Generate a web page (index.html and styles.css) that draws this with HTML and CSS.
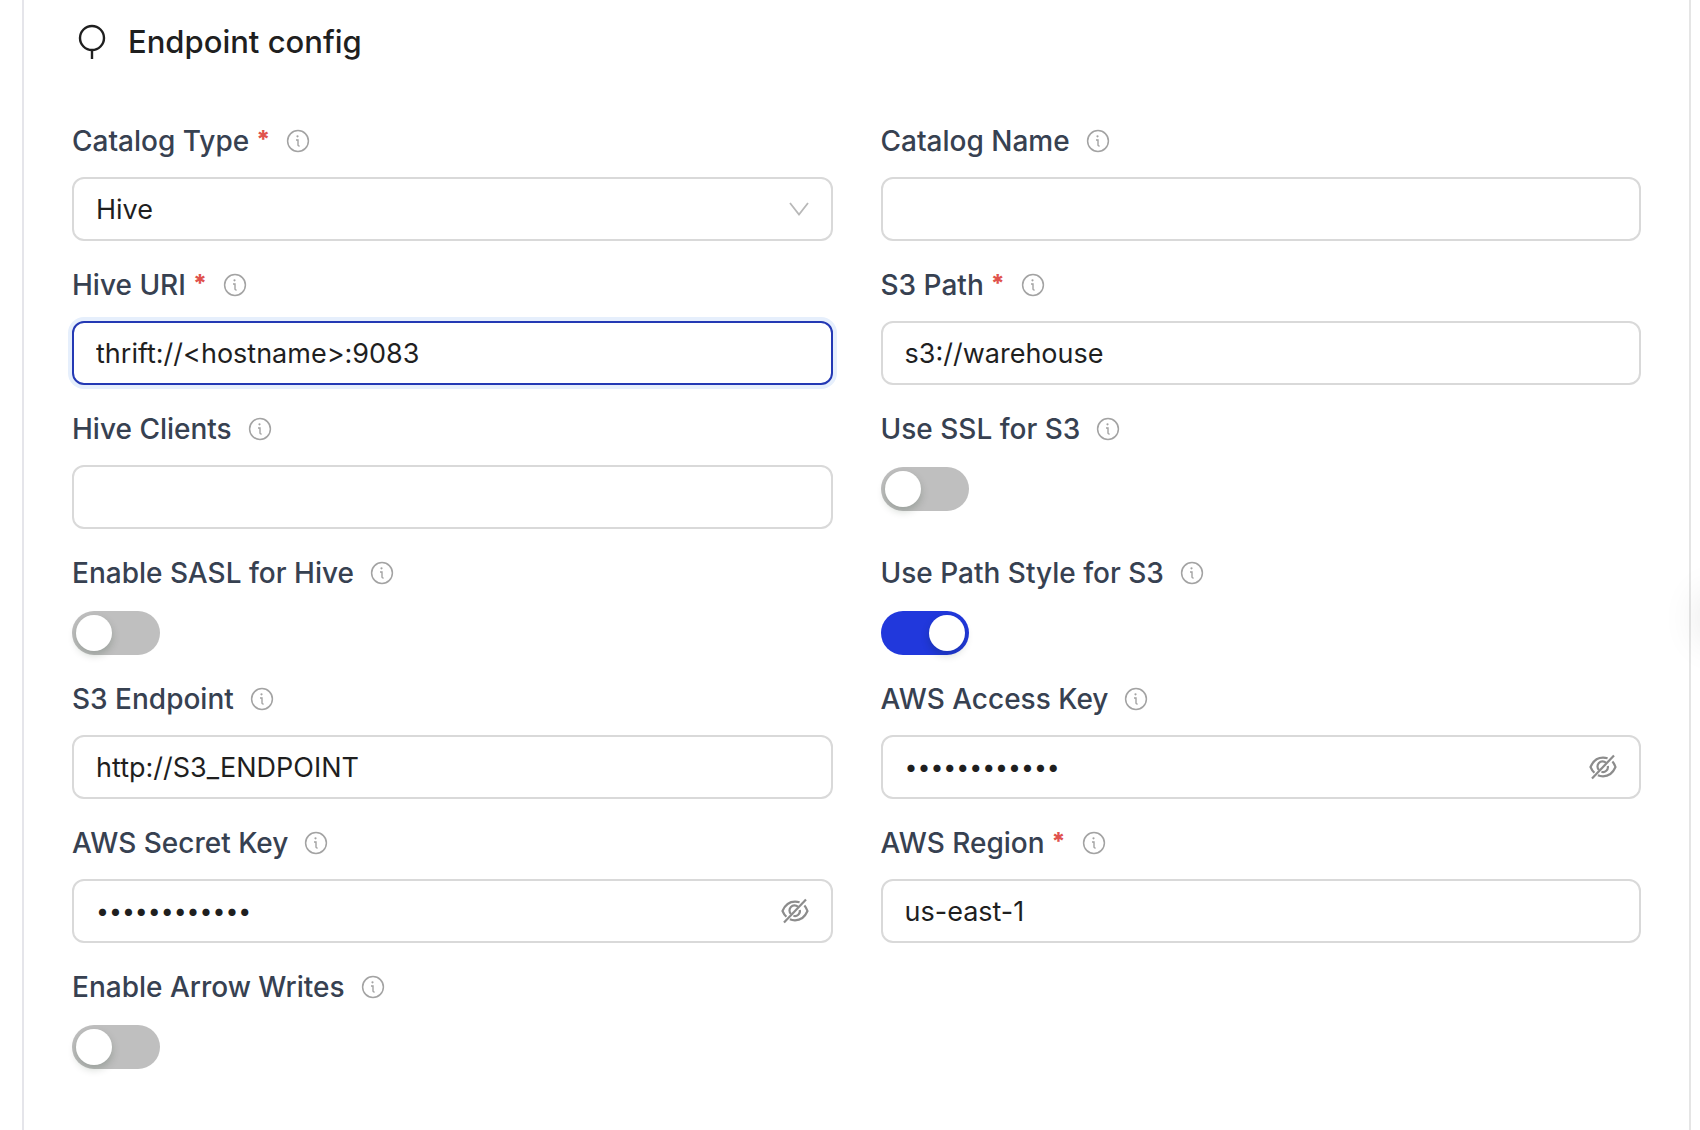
FILE: index.html
```html
<!DOCTYPE html>
<html lang="en">
<head>
  <meta charset="UTF-8">
  <meta name="viewport" content="width=device-width, initial-scale=1">
  <title>Endpoint config</title>
  <link rel="stylesheet" href="styles.css">
</head>
<body>

  <!-- Shared icons -->
  <svg class="icon-defs" aria-hidden="true">
    <symbol id="icon-info" viewBox="0 0 24 24">
      <circle cx="12" cy="12" r="10.4" fill="none" stroke="currentColor" stroke-width="1.5"/>
      <circle cx="11.5" cy="7.3" r="1.1" fill="currentColor"/>
      <path d="M10 11h2v4.8q0 1.4 1.6 1.2" fill="none" stroke="currentColor" stroke-width="1.4"/>
    </symbol>
    <symbol id="icon-eye-off" viewBox="0 0 28 28">
      <path d="M18.6 5.3A14 11 0 0 0 14 4.7C8 4.7 4 8.2 1.5 14c1 2.4 2.3 4.3 3.9 5.8M23.4 8.4c1.3 1.4 2.3 3.3 3.1 5.6C24 19.8 20 23.3 14 23.3c-1.9 0-3.6-.3-5.1-1" fill="none" stroke="currentColor" stroke-width="2.2"/>
      <path d="M17 9.8A5 5 0 0 0 10 17M18.8 13a5 5 0 0 1-6.4 5.8" fill="none" stroke="currentColor" stroke-width="2.2"/>
      <path d="M3 25.5 25 2.5" fill="none" stroke="currentColor" stroke-width="2.2"/>
    </symbol>
  </svg>

  <main class="card">
    <div class="card-header">
      <svg class="header-icon" viewBox="0 0 28 36" aria-hidden="true">
        <circle cx="14" cy="14" r="12" fill="none" stroke="currentColor" stroke-width="2.4"/>
        <path d="M14 26v9" stroke="currentColor" stroke-width="2.4"/>
      </svg>
      <h2>Endpoint config</h2>
    </div>

    <form class="config-form">
      <div class="form-item">
        <div class="form-label">
          <label for="catalog-type">Catalog Type</label>
          <span class="required">*</span>
          <svg class="info-icon"><use href="#icon-info"/></svg>
        </div>
        <div class="control">
          <select id="catalog-type" class="field">
            <option selected>Hive</option>
          </select>
          <svg class="arrow-icon" viewBox="0 0 20 14" aria-hidden="true">
            <path d="M1 1l9 11.5L19 1" fill="none" stroke="currentColor" stroke-width="1.8"/>
          </svg>
        </div>
      </div>

      <div class="form-item">
        <div class="form-label">
          <label for="catalog-name">Catalog Name</label>
          <svg class="info-icon"><use href="#icon-info"/></svg>
        </div>
        <input type="text" id="catalog-name" class="field">
      </div>

      <div class="form-item">
        <div class="form-label">
          <label for="hive-uri">Hive URI</label>
          <span class="required">*</span>
          <svg class="info-icon"><use href="#icon-info"/></svg>
        </div>
        <input type="text" id="hive-uri" class="field active" value="thrift://&lt;hostname&gt;:9083" required>
      </div>

      <div class="form-item">
        <div class="form-label">
          <label for="s3-path">S3 Path</label>
          <span class="required">*</span>
          <svg class="info-icon"><use href="#icon-info"/></svg>
        </div>
        <input type="text" id="s3-path" class="field" value="s3://warehouse" required>
      </div>

      <div class="form-item">
        <div class="form-label">
          <label for="hive-clients">Hive Clients</label>
          <svg class="info-icon"><use href="#icon-info"/></svg>
        </div>
        <input type="text" id="hive-clients" class="field">
      </div>

      <div class="form-item">
        <div class="form-label">
          <label for="use-ssl">Use SSL for S3</label>
          <svg class="info-icon"><use href="#icon-info"/></svg>
        </div>
        <input type="checkbox" role="switch" id="use-ssl" class="switch">
      </div>

      <div class="form-item">
        <div class="form-label">
          <label for="enable-sasl">Enable SASL for Hive</label>
          <svg class="info-icon"><use href="#icon-info"/></svg>
        </div>
        <input type="checkbox" role="switch" id="enable-sasl" class="switch">
      </div>

      <div class="form-item">
        <div class="form-label">
          <label for="path-style">Use Path Style for S3</label>
          <svg class="info-icon"><use href="#icon-info"/></svg>
        </div>
        <input type="checkbox" role="switch" id="path-style" class="switch" checked>
      </div>

      <div class="form-item">
        <div class="form-label">
          <label for="s3-endpoint">S3 Endpoint</label>
          <svg class="info-icon"><use href="#icon-info"/></svg>
        </div>
        <input type="text" id="s3-endpoint" class="field" value="http://S3_ENDPOINT">
      </div>

      <div class="form-item">
        <div class="form-label">
          <label for="access-key">AWS Access Key</label>
          <svg class="info-icon"><use href="#icon-info"/></svg>
        </div>
        <div class="control">
          <input type="password" id="access-key" class="field" value="accesskey123">
          <button type="button" class="eye-button" aria-label="Show access key">
            <svg class="eye-icon"><use href="#icon-eye-off"/></svg>
          </button>
        </div>
      </div>

      <div class="form-item">
        <div class="form-label">
          <label for="secret-key">AWS Secret Key</label>
          <svg class="info-icon"><use href="#icon-info"/></svg>
        </div>
        <div class="control">
          <input type="password" id="secret-key" class="field" value="secretkey123">
          <button type="button" class="eye-button" aria-label="Show secret key">
            <svg class="eye-icon"><use href="#icon-eye-off"/></svg>
          </button>
        </div>
      </div>

      <div class="form-item">
        <div class="form-label">
          <label for="aws-region">AWS Region</label>
          <span class="required">*</span>
          <svg class="info-icon"><use href="#icon-info"/></svg>
        </div>
        <input type="text" id="aws-region" class="field" value="us-east-1" required>
      </div>

      <div class="form-item">
        <div class="form-label">
          <label for="arrow-writes">Enable Arrow Writes</label>
          <svg class="info-icon"><use href="#icon-info"/></svg>
        </div>
        <input type="checkbox" role="switch" id="arrow-writes" class="switch">
      </div>
    </form>
  </main>

  <!-- Side handle, only its shadow reaches the page -->
  <div class="side-handle"></div>

</body>
</html>
```

FILE: styles.css
```css
* {
  box-sizing: border-box;
}

body {
  margin: 0;
  background-color: #fff;
  font-family: Inter, "Liberation Sans", sans-serif;
  font-size: 28px;
  line-height: 44px;
  color: #1f1f1f;
}

.icon-defs {
  display: none;
}

.card {
  min-height: 100vh;
  margin: 0 9px 0 22px;
  padding: 20px 48px 48px;
  border-left: 2px solid #e5e5ea;
  border-right: 2px solid #e5e5e5;
}

.card-header {
  display: flex;
  align-items: center;
  gap: 22px;
  margin-bottom: 55px;
  padding-left: 6px;
}

.card-header h2 {
  margin: 0;
  font-size: 31px;
  font-weight: 500;
}

.header-icon {
  width: 28px;
  height: 36px;
}

.config-form {
  display: grid;
  grid-template-columns: 1fr 1fr;
  column-gap: 48px;
  row-gap: 22px;
}

.form-label {
  display: flex;
  align-items: center;
  padding-bottom: 14px;
  font-weight: 500;
  color: #374151;
}

.required {
  align-self: flex-start;
  margin-left: 7px;
  font-size: 24px;
  font-weight: 800;
  line-height: 42px;
  color: #e0524d;
}

.info-icon {
  width: 24px;
  height: 24px;
  margin-left: 16px;
  color: #a3a3a3;
}

.control {
  position: relative;
}

/* Text fields and the drop-down */
.field {
  display: block;
  width: 100%;
  height: 64px;
  padding: 0 22px;
  border: 2px solid #d9d9d9;
  border-radius: 12px;
  background-color: #fff;
  font-family: inherit;
  font-size: 27px;
  color: #1f1f1f;
  outline: none;
  appearance: none;
}

.field[type="password"] {
  font-size: 23px;
}

.field:focus,
.field.active {
  border-color: #2439b4;
  box-shadow: 0 0 0 4px #e6effc;
}

.arrow-icon {
  position: absolute;
  top: 25px;
  right: 24px;
  width: 20px;
  height: 14px;
  color: #b8b8b8;
  pointer-events: none;
}

.eye-button {
  position: absolute;
  top: 18px;
  right: 24px;
  width: 28px;
  height: 28px;
  padding: 0;
  border: none;
  background: none;
  color: #8c8c8c;
  cursor: pointer;
}

.eye-icon {
  display: block;
  width: 28px;
  height: 28px;
}

/* Switches */
.switch {
  display: block;
  width: 88px;
  height: 44px;
  margin: 2px 0 0;
  padding: 4px;
  border-radius: 22px;
  background-color: #bfbfbf;
  appearance: none;
  cursor: pointer;
}

.switch::before {
  content: "";
  display: block;
  width: 36px;
  height: 36px;
  border-radius: 50%;
  background-color: #fff;
  box-shadow: 0 4px 8px rgba(0, 35, 11, 0.2);
}

.switch:checked {
  background-color: #2138dc;
}

.switch:checked::before {
  margin-left: auto;
}

.side-handle {
  position: fixed;
  top: 594px;
  right: -44px;
  width: 44px;
  height: 48px;
  border-radius: 22px;
  box-shadow: 0 0 40px rgba(0, 0, 0, 0.12);
}
```
